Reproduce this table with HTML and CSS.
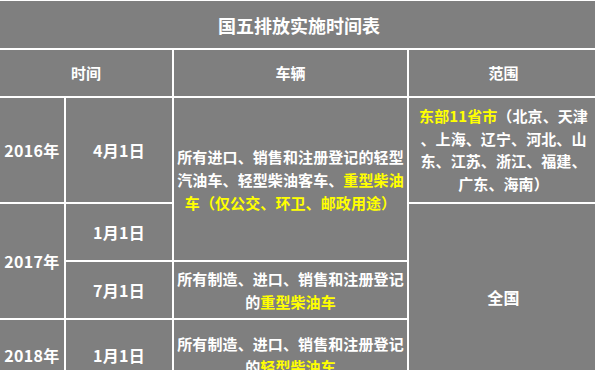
FILE: index.html
```html
<!DOCTYPE html>
<html lang="zh-CN">
<head>
<meta charset="utf-8">
<title>国五排放实施时间表</title>
<link rel="stylesheet" href="styles.css">
</head>
<body>
<table class="sched">
  <colgroup>
    <col class="c-year">
    <col class="c-date">
    <col class="c-veh">
    <col class="c-scope">
  </colgroup>
  <tr class="r-title">
    <td colspan="4" class="title">国五排放实施时间表</td>
  </tr>
  <tr class="r-head">
    <td colspan="2" class="head head-time">时间</td>
    <td class="head">车辆</td>
    <td class="head head-scope">范围</td>
  </tr>
  <tr class="r-a">
    <td class="key">2016年</td>
    <td class="key">4月1日</td>
    <td rowspan="2" class="body">所有进口、销售和注册登记的轻型<br>汽油车、轻型柴油客车、<span class="hl">重型柴油</span><br><span class="hl">车（仅公交、环卫、邮政用途）</span></td>
    <td class="body scope"><span class="hl">东部11省市</span>（北京、天津<br>、上海、辽宁、河北、山<br>东、江苏、浙江、福建、<br>广东、海南）</td>
  </tr>
  <tr class="r-b">
    <td rowspan="2" class="key">2017年</td>
    <td class="key">1月1日</td>
    <td rowspan="3" class="key">全国</td>
  </tr>
  <tr class="r-c">
    <td class="key">7月1日</td>
    <td class="body">所有制造、进口、销售和注册登记<br>的<span class="hl">重型柴油车</span></td>
  </tr>
  <tr class="r-d">
    <td class="key">2018年</td>
    <td class="key">1月1日</td>
    <td class="body">所有制造、进口、销售和注册登记<br>的<span class="hl">轻型柴油车</span></td>
  </tr>
</table>
</body>
</html>
```

FILE: styles.css
```css
html, body {
  margin: 0;
  padding: 0;
  background: #7f7f7f;
  overflow: hidden;
}

body {
  width: 595px;
  height: 370px;
  font-family: "Microsoft YaHei", "Noto Sans CJK SC", "Noto Sans", sans-serif;
  color: #ffffff;
}

.sched {
  table-layout: fixed;
  border-collapse: separate;
  border-spacing: 2px;
  background: #ffffff;
  margin: -1px 0 0 -2px;
  width: 602px;
}

.sched td {
  background: #7f7f7f;
  padding: 0 3px;
  text-align: center;
  vertical-align: middle;
  white-space: nowrap;
}

.c-year { width: 64px; }
.c-date { width: 106px; }
.c-veh { width: 233px; }
.c-scope { width: 189px; }

.r-title { height: 47px; }
.r-head { height: 46px; }
.r-a { height: 104px; }
.r-b { height: 56px; }
.r-c { height: 56px; }
.r-d { height: 70px; }

.title {
  font-size: 18px;
  font-weight: 700;
  line-height: 22px;
}

.head {
  font-size: 15px;
  font-weight: 700;
  line-height: 20px;
}

.head-time { padding-left: 20px; }
.head-scope { padding-left: 13px; }

.key {
  font-size: 16px;
  font-weight: 700;
  line-height: 20px;
  letter-spacing: 0.3px;
}

.body {
  font-size: 15px;
  font-weight: 700;
  line-height: 23px;
  letter-spacing: 0.1px;
}

.scope {
  line-height: 22.5px;
  padding-bottom: 4px;
}

.hl { color: #ffff00; }
```
